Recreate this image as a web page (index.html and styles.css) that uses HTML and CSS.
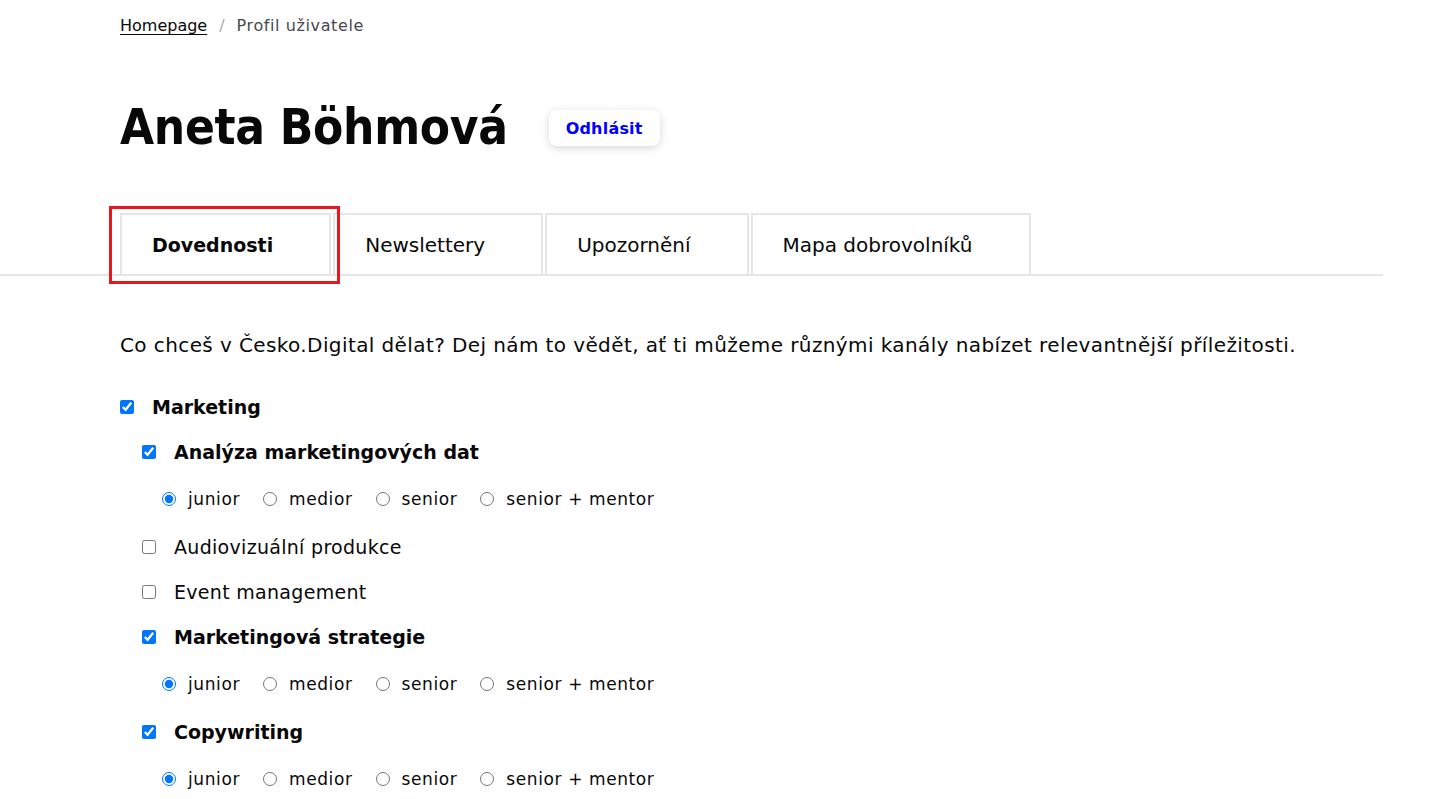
FILE: index.html
```html
<!DOCTYPE html>
<html lang="cs">
<head>
<meta charset="utf-8">
<title>Profil uživatele</title>
<link rel="stylesheet" href="styles.css">
</head>
<body>
<div class="page">
  <nav class="breadcrumb">
    <a href="#" class="crumb-link">Homepage</a>
    <span class="crumb-sep">/</span>
    <span class="crumb-current">Profil uživatele</span>
  </nav>

  <header class="profile-head">
    <h1 class="profile-name">Aneta Böhmová</h1>
    <button class="logout-btn" type="button">Odhlásit</button>
  </header>

  <div class="tabs">
    <div class="tab tab-active"><span>Dovednosti</span></div>
    <div class="tab"><span>Newslettery</span></div>
    <div class="tab"><span>Upozornění</span></div>
    <div class="tab"><span>Mapa dobrovolníků</span></div>
  </div>

  <section class="content">
    <p class="intro">Co chceš v Česko.Digital dělat? Dej nám to vědět, ať ti můžeme různými kanály nabízet relevantnější příležitosti.</p>

    <div class="skills">
      <label class="row row-top"><input type="checkbox" checked><span class="lbl bold">Marketing</span></label>

      <label class="row row-sub"><input type="checkbox" checked><span class="lbl bold">Analýza marketingových dat</span></label>
      <div class="levels">
        <label class="level"><input type="radio" name="l1" checked><span>junior</span></label>
        <label class="level"><input type="radio" name="l1"><span>medior</span></label>
        <label class="level"><input type="radio" name="l1"><span>senior</span></label>
        <label class="level"><input type="radio" name="l1"><span>senior + mentor</span></label>
      </div>

      <label class="row row-sub"><input type="checkbox"><span class="lbl">Audiovizuální produkce</span></label>
      <label class="row row-sub"><input type="checkbox"><span class="lbl">Event management</span></label>

      <label class="row row-sub"><input type="checkbox" checked><span class="lbl bold">Marketingová strategie</span></label>
      <div class="levels">
        <label class="level"><input type="radio" name="l2" checked><span>junior</span></label>
        <label class="level"><input type="radio" name="l2"><span>medior</span></label>
        <label class="level"><input type="radio" name="l2"><span>senior</span></label>
        <label class="level"><input type="radio" name="l2"><span>senior + mentor</span></label>
      </div>

      <label class="row row-sub"><input type="checkbox" checked><span class="lbl bold">Copywriting</span></label>
      <div class="levels">
        <label class="level"><input type="radio" name="l3" checked><span>junior</span></label>
        <label class="level"><input type="radio" name="l3"><span>medior</span></label>
        <label class="level"><input type="radio" name="l3"><span>senior</span></label>
        <label class="level"><input type="radio" name="l3"><span>senior + mentor</span></label>
      </div>
    </div>
  </section>
</div>
</body>
</html>
```

FILE: styles.css
```css
* { box-sizing: border-box; }

html, body {
  margin: 0;
  padding: 0;
  background: #fff;
}

body {
  font-family: "DejaVu Sans", "Noto Sans", sans-serif;
  color: #080808;
  overflow: hidden;
}

.page {
  width: 1383px;
}

.breadcrumb {
  padding: 15px 0 0 120px;
  height: 36px;
  font-size: 16px;
  line-height: 22px;
  display: flex;
  gap: 12px;
}

.crumb-link {
  color: #080808;
  text-decoration: underline;
  text-underline-offset: 3px;
}

.crumb-sep { color: #aaaaaa; }

.crumb-current {
  color: #47474f;
  letter-spacing: 0.6px;
}

.profile-head {
  display: flex;
  align-items: center;
  gap: 41px;
  padding-left: 120px;
  margin-top: 58px;
  height: 68px;
}

.profile-name {
  margin: 0;
  font-family: "DejaVu Sans Condensed", "DejaVu Sans", sans-serif;
  font-stretch: condensed;
  font-size: 49px;
  line-height: 68px;
  font-weight: 700;
  letter-spacing: -0.3px;
}

.logout-btn {
  font-family: inherit;
  font-size: 16px;
  font-weight: 700;
  color: #0000ff;
  background: #fff;
  border: none;
  border-radius: 8px;
  width: 111px;
  height: 36px;
  box-shadow: 0 2px 8px rgba(0, 0, 0, 0.16);
  letter-spacing: 0.2px;
}

.tabs {
  display: flex;
  gap: 2px;
  margin-top: 51px;
  padding-left: 120px;
  border-bottom: 2px solid #e6e6e6;
}

.tab {
  height: 61px;
  border: 2px solid #e6e6e6;
  border-bottom: none;
  padding: 0 56px 0 30px;
  display: flex;
  align-items: center;
  font-size: 20px;
  white-space: nowrap;
}

.tab-active {
  font-weight: 700;
  font-size: 19px;
  position: relative;
}

.tab-active::after {
  content: "";
  position: absolute;
  left: -13px;
  right: -11px;
  top: -9px;
  bottom: -10px;
  border: 3px solid #e8171f;
}

.content {
  padding-left: 120px;
}

.intro {
  margin: 54px 0 0;
  font-size: 20px;
  line-height: 30px;
  letter-spacing: 0.4px;
  white-space: nowrap;
}

.skills {
  margin-top: 24px;
  display: flex;
  flex-direction: column;
}

.row {
  display: flex;
  align-items: center;
  height: 45px;
  font-size: 19px;
}

.row input {
  width: 14px;
  height: 14px;
  margin: 0 18px 0 0;
}

.row-sub { padding-left: 22px; }

.lbl { letter-spacing: 0.3px; }

.bold {
  font-weight: 700;
  letter-spacing: 0;
}

.levels {
  display: flex;
  align-items: center;
  height: 50px;
  padding-left: 42px;
  font-size: 17px;
  letter-spacing: 0.6px;
}

.level {
  display: flex;
  align-items: center;
  margin-right: 23px;
}

.level input {
  width: 14px;
  height: 14px;
  margin: 0 12px 0 0;
}
```
